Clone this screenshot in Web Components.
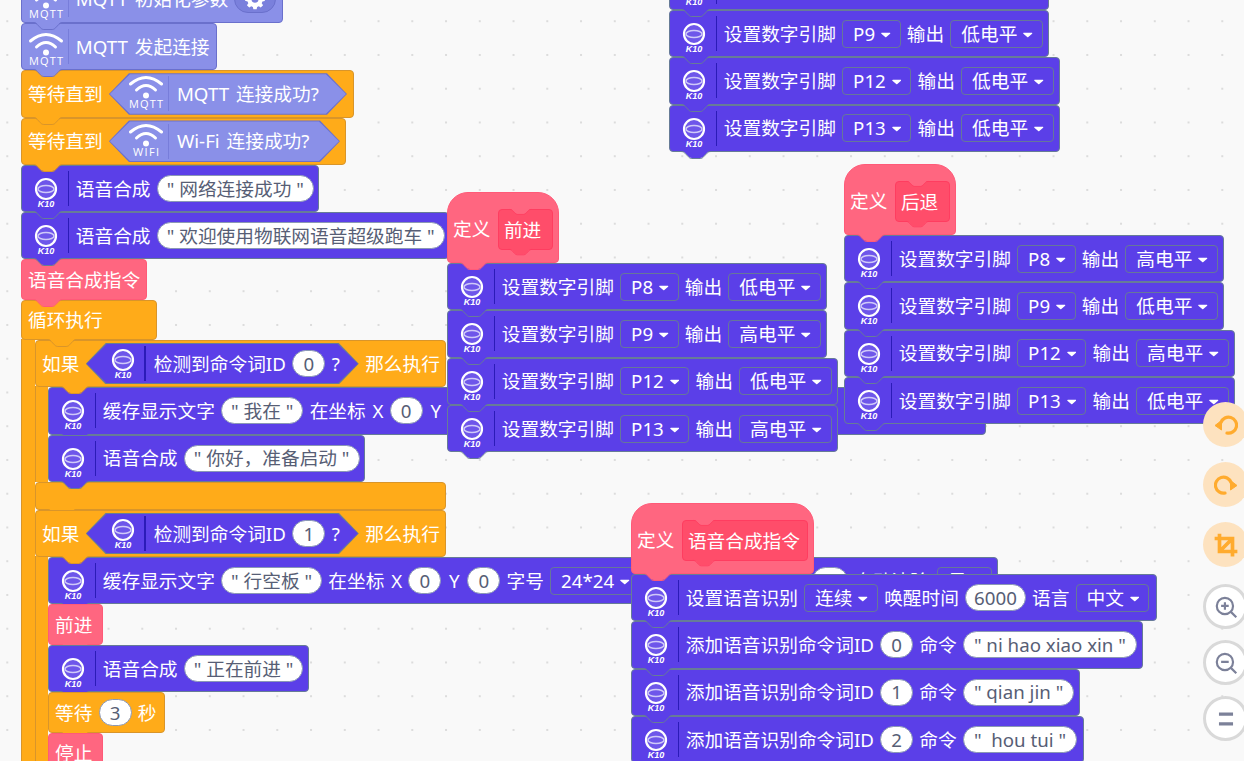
<!DOCTYPE html>
<html>
<head>
<meta charset="utf-8">
<title>blocks</title>
<style>
  html, body { margin: 0; padding: 0; overflow: hidden; }
  .y { margin: 0 1.5px; }
  .latin { padding: 0 10px; }
</style>
</head>
<body>
<block-canvas>

  <block-stack x="21" y="-24.3" layer="1">
    <block-row color="blue" icon="mqtt" w="262">MQTT 初始化参数 <gear-pill></gear-pill></block-row>
    <block-row color="blue" icon="mqtt" w="196">MQTT 发起连接</block-row>
    <block-row color="orange" w="333">等待直到 <block-bool color="blue" icon="mqtt" w="238">MQTT 连接成功?</block-bool></block-row>
    <block-row color="orange" w="325">等待直到 <block-bool color="blue" icon="wifi" w="231">Wi-Fi 连接成功?</block-bool></block-row>
    <block-row icon="k10" w="298">语音合成 <str-field>" 网络连接成功 "</str-field></block-row>
    <block-row icon="k10" w="428">语音合成 <str-field>" 欢迎使用物联网语音超级跑车 "</str-field></block-row>
    <block-row color="red" w="126" h="40.5">语音合成指令</block-row>
    <block-loop w="136" head="40" arm="14" foot="28">
      <span slot="head">循环执行</span>
      <block-loop w="411" head="47.3" arm="13" foot="28">
        <span slot="head">如果</span>
        <block-bool slot="head" color="purple" icon="k10" w="273">检测到命令词ID <num-field>0</num-field> ?</block-bool>
        <span slot="head">那么执行</span>
        <block-row icon="k10" w="938">缓存显示文字 <str-field>" 我在 "</str-field> 在坐标 X <num-field>0</num-field> <span class="y">Y</span> <num-field>0</num-field> 字号 <drop-field>24*24</drop-field></block-row>
        <block-row icon="k10" w="317">语音合成 <str-field>" 你好，准备启动 "</str-field></block-row>
      </block-loop>
      <block-loop w="411" head="47.3" arm="13" foot="0">
        <span slot="head">如果</span>
        <block-bool slot="head" color="purple" icon="k10" w="273">检测到命令词ID <num-field>1</num-field> ?</block-bool>
        <span slot="head">那么执行</span>
        <block-row icon="k10" w="950">缓存显示文字 <str-field>" 行空板 "</str-field> 在坐标 X <num-field>0</num-field> <span class="y">Y</span> <num-field>0</num-field> 字号 <drop-field>24*24</drop-field> <num-field style="margin-left:166px;width:36px">50</num-field> 自动清除 <drop-field style="margin-left:2px">是</drop-field></block-row>
        <block-row color="red" w="55" h="40.5">前进</block-row>
        <block-row icon="k10" w="261">语音合成 <str-field>" 正在前进 "</str-field></block-row>
        <block-row color="orange" w="117" h="40.5">等待 <num-field>3</num-field> 秒</block-row>
        <block-row color="red" w="55" h="40.5">停止</block-row>
      </block-loop>
    </block-loop>
  </block-stack>

  <block-stack x="669" y="-37.3" layer="2">
    <block-row icon="k10" w="380">设置数字引脚 <drop-field>P8</drop-field> 输出 <drop-field>低电平</drop-field></block-row>
    <block-row icon="k10" w="380">设置数字引脚 <drop-field>P9</drop-field> 输出 <drop-field>低电平</drop-field></block-row>
    <block-row icon="k10" w="391">设置数字引脚 <drop-field>P12</drop-field> 输出 <drop-field>低电平</drop-field></block-row>
    <block-row icon="k10" w="391">设置数字引脚 <drop-field>P13</drop-field> 输出 <drop-field>低电平</drop-field></block-row>
  </block-stack>

  <block-stack x="447" y="192" layer="3">
    <block-hat w="112">定义 <block-call w="55">前进</block-call></block-hat>
    <block-row icon="k10" w="380">设置数字引脚 <drop-field>P8</drop-field> 输出 <drop-field>低电平</drop-field></block-row>
    <block-row icon="k10" w="380">设置数字引脚 <drop-field>P9</drop-field> 输出 <drop-field>高电平</drop-field></block-row>
    <block-row icon="k10" w="391">设置数字引脚 <drop-field>P12</drop-field> 输出 <drop-field>低电平</drop-field></block-row>
    <block-row icon="k10" w="391">设置数字引脚 <drop-field>P13</drop-field> 输出 <drop-field>高电平</drop-field></block-row>
  </block-stack>

  <block-stack x="844" y="164" layer="4">
    <block-hat w="112">定义 <block-call w="55">后退</block-call></block-hat>
    <block-row icon="k10" w="380">设置数字引脚 <drop-field>P8</drop-field> 输出 <drop-field>高电平</drop-field></block-row>
    <block-row icon="k10" w="380">设置数字引脚 <drop-field>P9</drop-field> 输出 <drop-field>低电平</drop-field></block-row>
    <block-row icon="k10" w="391">设置数字引脚 <drop-field>P12</drop-field> 输出 <drop-field>高电平</drop-field></block-row>
    <block-row icon="k10" w="391">设置数字引脚 <drop-field>P13</drop-field> 输出 <drop-field>低电平</drop-field></block-row>
  </block-stack>

  <block-stack x="631" y="503" layer="5">
    <block-hat w="183">定义 <block-call w="126">语音合成指令</block-call></block-hat>
    <block-row icon="k10" w="526">设置语音识别 <drop-field>连续</drop-field> 唤醒时间 <num-field>6000</num-field> 语言 <drop-field>中文</drop-field></block-row>
    <block-row icon="k10" w="512">添加语音识别命令词ID <num-field>0</num-field> 命令 <str-field class="latin">" ni hao xiao xin "</str-field></block-row>
    <block-row icon="k10" w="449">添加语音识别命令词ID <num-field>1</num-field> 命令 <str-field class="latin">" qian jin "</str-field></block-row>
    <block-row icon="k10" w="453">添加语音识别命令词ID <num-field>2</num-field> 命令 <str-field class="latin">"&nbsp; hou tui "</str-field></block-row>
  </block-stack>

  <tool-bar></tool-bar>
</block-canvas>

<script>
const FONT = '"Noto Sans", "Noto Sans CJK SC", sans-serif';

const COLORS = `
  :host { --fill: #5b3fe8; --line: #677c97; }
  :host([color="blue"]) { --fill: #8a90e8; --line: #6a70cc; }
  :host([color="orange"]) { --fill: #ffab19; --line: #d9952a; }
  :host([color="red"]) { --fill: #ff6680; --line: #ff5a78; }
`;

// the little tab under a block, it hangs over the next one
const bumpSvg = (cls) => `
  <svg class="${cls}" width="30" height="9" viewBox="0 0 30 9">
    <path d="M0 0c2 0 3 .8 4 1.7l3.4 3.6c.9.9 1.8 1.7 3.4 1.7h8.4c1.6 0 2.5-.8 3.4-1.7L26 1.7C27 .8 28 0 30 0z" fill="var(--fill)"/>
    <path d="M0 .5c2 0 3 .8 4 1.7l3.4 3.6c.9.9 1.8 1.7 3.4 1.7h8.4c1.6 0 2.5-.8 3.4-1.7L26 2.2C27 1.3 28 .5 30 .5" fill="none" stroke="var(--line)"/>
  </svg>`;

const setWidth = (el) => {
  if (el.hasAttribute('w')) el.style.width = el.getAttribute('w') + 'px';
};

class BlockCanvas extends HTMLElement {
  constructor() {
    super();
    this.attachShadow({mode: 'open'}).innerHTML = `
    <style>
      :host {
        display: block;
        position: relative;
        width: 1244px;
        height: 761px;
        overflow: hidden;
        background-color: #f9f9f9;
        background-image: radial-gradient(circle, #dcdcdc 0.9px, transparent 1.3px);
        background-size: 33.75px 33.75px;
        background-position: -9.6px 4.35px;
        font: 18.7px/22px ${FONT};
        word-spacing: 2px;
      }
    </style>
    <slot></slot>`;
  }
}

class BlockStack extends HTMLElement {
  constructor() {
    super();
    this.attachShadow({mode: 'open'}).innerHTML = `
    <style>
      :host { display: flex; flex-direction: column; align-items: flex-start; }
      :host([x]) { position: absolute; }
    </style>
    <slot></slot>`;
  }

  connectedCallback() {
    if (this.hasAttribute('x')) {
      this.style.left = this.getAttribute('x') + 'px';
      this.style.top = this.getAttribute('y') + 'px';
      this.style.zIndex = this.getAttribute('layer');
    }
    // upper block sits above the lower one so its tab stays visible
    queueMicrotask(() => {
      const kids = [...this.children];
      kids.forEach((kid, i) => {
        kid.style.position = 'relative';
        kid.style.zIndex = kids.length - i;
      });
    });
  }
}

class BlockRow extends HTMLElement {
  constructor() {
    super();
    const icon = this.getAttribute('icon');
    this.attachShadow({mode: 'open'}).innerHTML = `
    <style>
      ${COLORS}
      :host { display: block; position: relative; height: 47.3px; flex: none; color: #fff; white-space: nowrap; }
      .box {
        box-sizing: border-box;
        height: 100%;
        display: flex;
        align-items: center;
        gap: 6.2px;
        padding: 0 6px;
        background: var(--fill);
        border: 1px solid var(--line);
        border-radius: 4px;
      }
      .box.has-icon { padding-left: 0; }
      .tab { position: absolute; left: 12px; top: calc(100% - 1px); overflow: visible; }
      block-icon { margin-right: .6px; }
    </style>
    <div class="box ${icon ? 'has-icon' : ''}">
      ${icon ? `<block-icon kind="${icon}"></block-icon>` : ''}
      <slot></slot>
    </div>
    ${bumpSvg('tab')}`;
  }

  connectedCallback() {
    setWidth(this);
    if (this.hasAttribute('h')) this.style.height = this.getAttribute('h') + 'px';
  }
}

class BlockLoop extends HTMLElement {
  constructor() {
    super();
    const arm = this.getAttribute('arm');
    const head = this.getAttribute('head');
    const foot = this.getAttribute('foot');
    const w = this.getAttribute('w');
    this.attachShadow({mode: 'open'}).innerHTML = `
    <style>
      :host { display: block; flex: none; color: #fff; white-space: nowrap; --fill: #ffab19; --line: #d9952a; }
      .head, .foot {
        position: relative;
        box-sizing: border-box;
        width: ${w}px;
        background: var(--fill);
        border: 1px solid var(--line);
        border-radius: 4px;
      }
      .head {
        height: ${head}px;
        z-index: 3;
        display: flex;
        align-items: center;
        gap: 6.4px;
        padding: 0 6px;
      }
      .body { display: flex; position: relative; z-index: 2; }
      .arm {
        flex: none;
        width: ${arm}px;
        margin-top: -1px;
        box-sizing: border-box;
        background: var(--fill);
        border-left: 1px solid var(--line);
      }
      .foot { height: ${foot}px; z-index: 1; }
      .foot.none { display: none; }
      .tab { position: absolute; overflow: visible; top: calc(100% + 0px); }
      .head .tab { left: ${+arm + 11}px; }
      .foot .tab { left: 11px; }
    </style>
    <div class="head"><slot name="head"></slot>${bumpSvg('tab')}</div>
    <div class="body">
      <div class="arm"></div>
      <block-stack><slot></slot></block-stack>
    </div>
    <div class="foot ${+foot ? '' : 'none'}">${bumpSvg('tab')}</div>`;
  }
}

class BlockHat extends HTMLElement {
  constructor() {
    super();
    this.attachShadow({mode: 'open'}).innerHTML = `
    <style>
      :host { display: block; flex: none; position: relative; color: #fff; white-space: nowrap; height: 71px; --fill: #ff6680; --line: #ff5a78; }
      .box {
        box-sizing: border-box;
        height: 100%;
        padding: 16px 6px 0 5px;
        display: flex;
        align-items: flex-start;
        gap: 7.5px;
        line-height: 39px;
        background: var(--fill);
        border: 1px solid var(--line);
        border-radius: 21px 21px 4px 4px;
      }
      .tab { position: absolute; left: 12px; top: calc(100% - 1px); overflow: visible; }
    </style>
    <div class="box"><slot></slot></div>
    ${bumpSvg('tab')}`;
  }

  connectedCallback() {
    setWidth(this);
  }
}

class BlockCall extends HTMLElement {
  constructor() {
    super();
    this.attachShadow({mode: 'open'}).innerHTML = `
    <style>
      :host { display: block; flex: none; position: relative; height: 41px; --fill: #ff4d6a; --line: #ff3d60; }
      .box {
        box-sizing: border-box;
        height: 100%;
        padding: 0 5px;
        display: flex;
        align-items: center;
        background: var(--fill);
        border: 1px solid var(--line);
        border-radius: 4px;
      }
      .notch { position: absolute; left: 10px; top: 0; width: 25px; height: 6.5px; overflow: visible; --fill: #ff6680; }
      .tab { position: absolute; left: 10px; top: calc(100% - 1px); width: 25px; height: 7px; overflow: visible; }
    </style>
    <div class="box"><slot></slot></div>
    ${bumpSvg('notch')}
    ${bumpSvg('tab')}`;
  }

  connectedCallback() {
    setWidth(this);
  }
}

class BlockBool extends HTMLElement {
  constructor() {
    super();
    const icon = this.getAttribute('icon');
    const hex = 'polygon(20px 0, calc(100% - 20px) 0, 100% 50%, calc(100% - 20px) 100%, 20px 100%, 0 50%)';
    this.attachShadow({mode: 'open'}).innerHTML = `
    <style>
      ${COLORS}
      :host { display: block; flex: none; position: relative; height: 41.5px; }
      .edge, .face { position: absolute; clip-path: ${hex}; }
      .edge { inset: 0; background: var(--line); }
      .face { inset: 1px; background: var(--fill); }
      .row {
        position: relative;
        height: 100%;
        display: flex;
        align-items: center;
        gap: 6.4px;
        padding-left: 13px;
      }
      block-icon { margin-right: 1.6px; }
    </style>
    <div class="edge"></div>
    <div class="face"></div>
    <div class="row">
      <block-icon kind="${icon}" compact></block-icon>
      <slot></slot>
    </div>`;
  }

  connectedCallback() {
    setWidth(this);
  }
}

class BlockIcon extends HTMLElement {
  constructor() {
    super();
    const kind = this.getAttribute('kind');
    const box = this.hasAttribute('compact') ? '0 4 47 47' : '0 0 47 47';
    const wifi = (label, len) => `
      <path d="M8.5 18Q24 5 39.5 18" fill="none" stroke="#fff" stroke-width="3" stroke-linecap="round"/>
      <path d="M14.5 24Q24 15 33.5 24" fill="none" stroke="#fff" stroke-width="3" stroke-linecap="round"/>
      <circle cx="24" cy="29.5" r="3" fill="#fff"/>
      <text x="24" y="42" text-anchor="middle" font-family="Open Sans" font-size="11" fill="#fff" textLength="${len}" lengthAdjust="spacing">${label}</text>`;
    const art = {
      k10: `
        <circle cx="24" cy="24" r="10" fill="#fff" fill-opacity=".12" stroke="#fff" stroke-width="2.2"/>
        <ellipse cx="24" cy="24" rx="8" ry="3.6" fill="none" stroke="#cfc9f8" stroke-width="1.5"/>
        <text x="24" y="42" text-anchor="middle" font-family="Liberation Sans" font-size="9" font-weight="700" font-style="italic" fill="#fff">K10</text>`,
      mqtt: wifi('MQTT', 34),
      wifi: wifi('WIFI', 26),
    }[kind];
    this.attachShadow({mode: 'open'}).innerHTML = `
    <style>
      :host { display: block; flex: none; position: relative; width: 47px; height: 47px; }
      svg { display: block; }
      .sep { position: absolute; right: 0; top: 6px; height: 35px; width: 1.4px; background: ${kind === 'k10' ? '#2b1bb8' : '#777dda'}; }
    </style>
    <svg width="47" height="47" viewBox="${box}">${art}</svg>
    <div class="sep"></div>`;
  }
}

class StrField extends HTMLElement {
  constructor() {
    super();
    this.attachShadow({mode: 'open'}).innerHTML = `
    <style>
      :host {
        display: flex;
        flex: none;
        align-items: center;
        justify-content: center;
        box-sizing: border-box;
        height: 27px;
        padding: 0 9px;
        background: #fff;
        color: #575e75;
        word-spacing: 0;
        border: 1px solid #8b98b5;
        border-radius: 14px;
      }
    </style>
    <slot></slot>`;
  }
}

class NumField extends StrField {
  constructor() {
    super();
    this.shadowRoot.querySelector('style').textContent += ':host { min-width: 33px; padding: 0 8px; }';
  }
}

class DropField extends HTMLElement {
  constructor() {
    super();
    this.attachShadow({mode: 'open'}).innerHTML = `
    <style>
      :host {
        display: flex;
        flex: none;
        align-items: center;
        gap: 6px;
        box-sizing: border-box;
        height: 28px;
        padding: 0 9px 0 10px;
        color: #fff;
        border: 1px solid #66779a;
        border-radius: 4px;
      }
      svg { display: block; margin-top: 2px; }
    </style>
    <slot></slot>
    <svg width="9.5" height="6" viewBox="0 0 10 6"><path d="M1 .5h8c.7 0 1 .6.6 1.1L5.6 5.2c-.3.3-.9.3-1.2 0L.4 1.6C0 1.1.3.5 1 .5z" fill="#fff"/></svg>`;
  }
}

class GearPill extends HTMLElement {
  constructor() {
    super();
    this.attachShadow({mode: 'open'}).innerHTML = `
    <style>
      :host {
        display: flex;
        flex: none;
        align-items: center;
        justify-content: center;
        box-sizing: border-box;
        width: 42px;
        height: 28px;
        background: #7a80dc;
        border: 1px solid #6a70cc;
        border-radius: 14px;
      }
    </style>
    <svg width="22" height="22" viewBox="0 0 24 24"><path fill="#fff" fill-rule="evenodd" d="M13.8 2l.5 2.6 1.8.8 2.2-1.5 2.5 2.5-1.5 2.2.8 1.8 2.6.5v3.4l-2.6.5-.8 1.8 1.5 2.2-2.5 2.5-2.2-1.5-1.8.8-.5 2.6h-3.6l-.5-2.6-1.8-.8-2.2 1.5-2.5-2.5 1.5-2.2-.8-1.8L1.2 14v-3.6l2.6-.5.8-1.8-1.5-2.2 2.5-2.5 2.2 1.5 1.8-.8.5-2.1zM12 8.4a3.8 3.8 0 100 7.6 3.8 3.8 0 000-7.6z"/></svg>`;
  }
}

class ToolBar extends HTMLElement {
  constructor() {
    super();
    const warm = 'fill="none" stroke="#ffab2e" stroke-width="3.2"';
    const cool = 'fill="none" stroke="#7c8199" stroke-width="2"';
    this.attachShadow({mode: 'open'}).innerHTML = `
    <style>
      :host { position: absolute; left: 1203px; top: 402px; z-index: 10; display: flex; flex-direction: column; }
      .btn {
        box-sizing: border-box;
        width: 45px;
        height: 45px;
        margin-bottom: 15px;
        border-radius: 50%;
        display: flex;
        align-items: center;
        justify-content: center;
      }
      .warm { background: #fde2bf; }
      .cool { background: #fff; border: 3px solid #d9d9d9; margin-bottom: 11px; }
      .last { margin-bottom: 17px; }
    </style>
    <div class="btn warm">
      <svg width="24" height="24" viewBox="0 0 24 24"><path d="M7 9.5A8 8 0 1113 20" ${warm} stroke-linecap="round"/><path d="M1 12.5L7.5 7.5V17z" fill="#ffab2e" stroke="#ffab2e" stroke-linejoin="round"/></svg>
    </div>
    <div class="btn warm">
      <svg width="24" height="24" viewBox="0 0 24 24"><path d="M17 9.5A8 8 0 1011 20" ${warm} stroke-linecap="round"/><path d="M23 12.5L16.5 7.5V17z" fill="#ffab2e" stroke="#ffab2e" stroke-linejoin="round"/></svg>
    </div>
    <div class="btn warm last">
      <svg width="26" height="26" viewBox="0 0 24 24"><path d="M6 1.5V18h16.5M1.5 6H18v16.5M6.5 17.5L17.5 6.5" fill="none" stroke="#ffab2e" stroke-width="3.4"/></svg>
    </div>
    <div class="btn cool">
      <svg width="26" height="26" viewBox="0 0 24 24"><circle cx="11" cy="11" r="7.5" ${cool}/><path d="M16.5 16.5l5 5M7.5 11h7M11 7.5v7" ${cool}/></svg>
    </div>
    <div class="btn cool">
      <svg width="26" height="26" viewBox="0 0 24 24"><circle cx="11" cy="11" r="7.5" ${cool}/><path d="M16.5 16.5l5 5M7.5 11h7" ${cool}/></svg>
    </div>
    <div class="btn cool">
      <svg width="26" height="26" viewBox="0 0 24 24"><path d="M5.5 7.5h13M5.5 16.5h13" fill="none" stroke="#7c8199" stroke-width="3"/></svg>
    </div>`;
  }
}

customElements.define('block-icon', BlockIcon);
customElements.define('str-field', StrField);
customElements.define('num-field', NumField);
customElements.define('drop-field', DropField);
customElements.define('gear-pill', GearPill);
customElements.define('block-bool', BlockBool);
customElements.define('block-call', BlockCall);
customElements.define('block-hat', BlockHat);
customElements.define('block-row', BlockRow);
customElements.define('block-loop', BlockLoop);
customElements.define('block-stack', BlockStack);
customElements.define('tool-bar', ToolBar);
customElements.define('block-canvas', BlockCanvas);
</script>
</body>
</html>
